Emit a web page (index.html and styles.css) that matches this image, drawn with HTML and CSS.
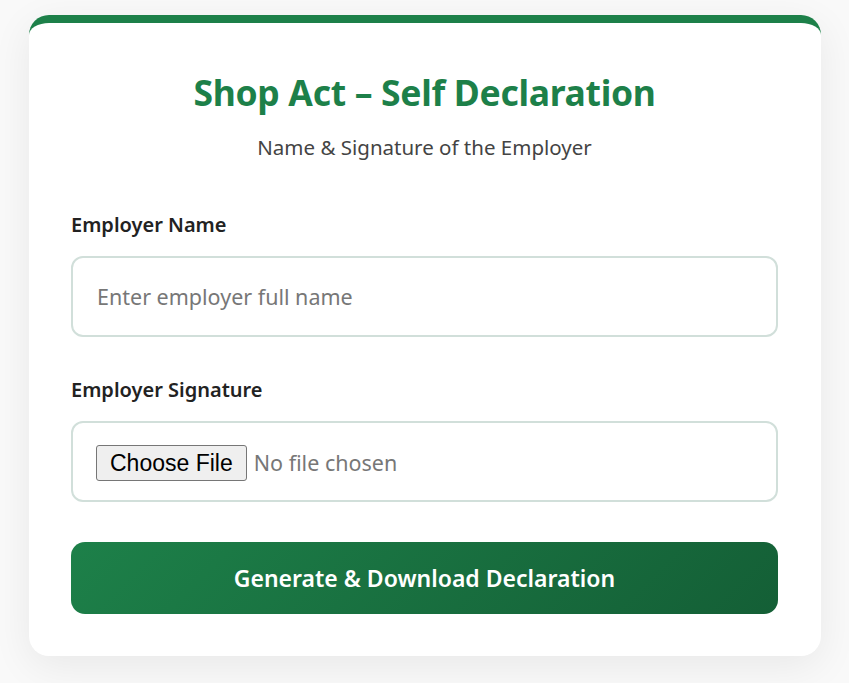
FILE: index.html
```html
<!DOCTYPE html>
<html lang="en">
<head>
<meta charset="utf-8">
<title>Shop Act – Self Declaration</title>
<link rel="stylesheet" href="styles.css">
</head>
<body>
<main class="card">
  <h1 class="title">Shop Act – Self Declaration</h1>
  <p class="subtitle">Name &amp; Signature of the Employer</p>
  <form class="form">
    <div class="field">
      <label class="label" for="name">Employer Name</label>
      <input class="input" id="name" type="text" placeholder="Enter employer full name">
    </div>
    <div class="field">
      <label class="label" for="sig">Employer Signature</label>
      <input class="input file" id="sig" type="file">
    </div>
    <button class="btn" type="button">Generate &amp; Download Declaration</button>
  </form>
</main>
</body>
</html>
```
FILE: styles.css
```css
* { box-sizing: border-box; }
html, body { margin: 0; }
body {
  background: #f9f9f9;
  font-family: "Noto Sans", "Open Sans", sans-serif;
  padding: 15px 28px 27px 29px;
}
.card {
  width: 792px;
  background: #fff;
  border-top: 8px solid #1d8049;
  border-radius: 20px;
  box-shadow: 0 10px 40px rgba(0,0,0,0.07);
  padding: 45px 43px 42px 42px;
}
.title {
  margin: 0;
  text-align: center;
  color: #1d8049;
  font-size: 35.5px;
  line-height: 48px;
  font-weight: 700;
  letter-spacing: -0.3px;
}
.subtitle {
  margin: 18px 0 0;
  text-align: center;
  color: #444;
  font-size: 20.5px;
  line-height: 26px;
}
.form { margin-top: 52px; display: flex; flex-direction: column; }
.field { display: flex; flex-direction: column; margin-bottom: 40px; }
.label {
  font-size: 20px;
  line-height: 26px;
  font-weight: 600;
  color: #222;
  margin-bottom: 18px;
}
.input {
  height: 81px;
  border: 2px solid #d1dfda;
  border-radius: 12px;
  padding: 0 24px;
  font-family: inherit;
  font-size: 21.5px;
  color: #222;
  outline: none;
}
.input::placeholder { color: #777; }
.file { color: #777; display: flex; align-items: center; padding-top: 22px; }
.file::file-selector-button {
  font-family: "Liberation Sans", Arial, sans-serif;
  font-size: 23px;
  color: #000;
  padding: 1px 13px;
  margin-left: -1px;
  margin-right: 7px;
  background: #efefef;
  border: 1px solid #767676;
  border-radius: 3px;
  height: 36px;
}
.btn {
  height: 72px;
  border: none;
  border-radius: 14px;
  background: linear-gradient(135deg, #1d8049 0%, #145f36 100%);
  color: #fff;
  font-family: inherit;
  font-size: 23px;
  font-weight: 600;
  cursor: pointer;
}
```
